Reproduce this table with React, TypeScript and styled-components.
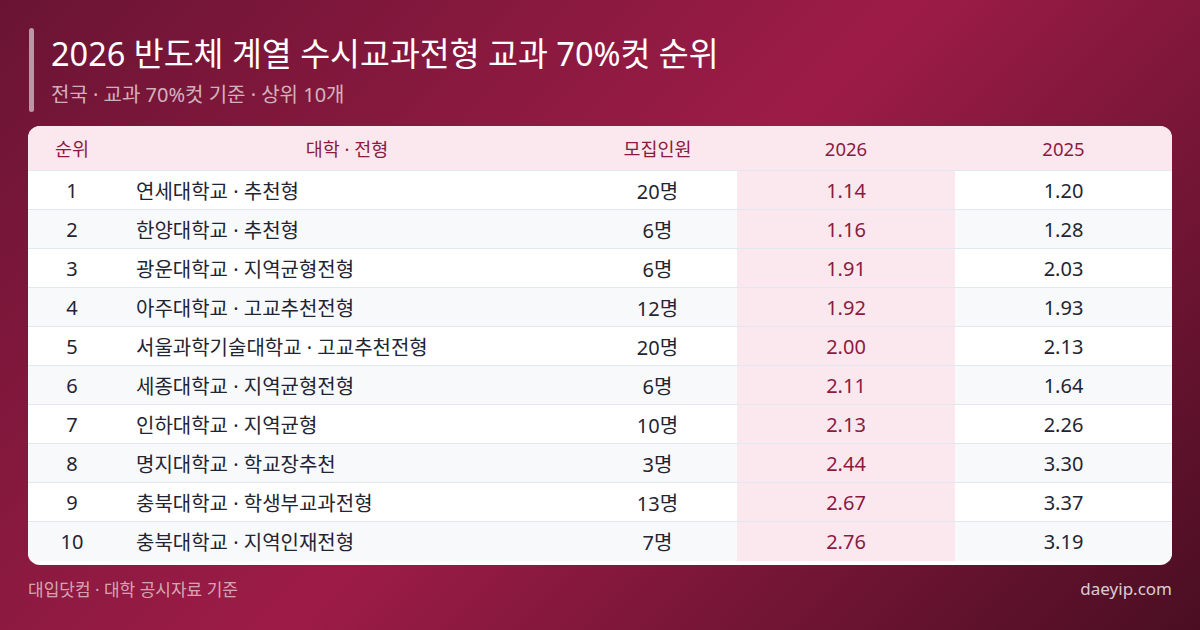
import React from "react";
import styled, { createGlobalStyle } from "styled-components";

const Global = createGlobalStyle`
  html, body { margin: 0; padding: 0; }
  body {
    width: 1200px;
    height: 630px;
    overflow: hidden;
    font-family: "Noto Sans", "Noto Sans CJK KR", sans-serif;
  }
`;

const Page = styled.div`
  box-sizing: border-box;
  width: 1200px;
  height: 630px;
  padding: 28px 28px 0 28px;
  background: linear-gradient(135deg, #6a1433 0%, #9d1c47 50%, #4a0e22 100%);
  display: flex;
  flex-direction: column;
`;

const Header = styled.div`
  display: flex;
  gap: 17px;
  height: 84px;
`;

const AccentBar = styled.div`
  width: 5px;
  margin-left: 1px;
  border-radius: 3px;
  background: rgba(255, 255, 255, 0.55);
`;

const TitleBlock = styled.div`
  display: flex;
  flex-direction: column;
`;

const Title = styled.h1`
  margin: 0;
  margin-top: 4px;
  font-size: 32.5px;
  font-weight: 400;
  line-height: 44px;
  color: #ffffff;
`;

const Subtitle = styled.div`
  margin-top: 6px;
  font-size: 20px;
  line-height: 26px;
  color: rgba(255, 255, 255, 0.68);
`;

const Card = styled.div`
  margin-top: 14px;
  background: #ffffff;
  border-radius: 12px;
  overflow: hidden;
  padding-bottom: 4px;
`;

const COLS = "88px 462px 159px 218px 1fr";

const HeadRow = styled.div`
  display: grid;
  grid-template-columns: ${COLS};
  height: 45px;
  background: #fbe8ef;
  border-bottom: 1px solid #e2e8f0;
  box-sizing: border-box;
`;

const HeadCell = styled.div`
  display: flex;
  align-items: center;
  justify-content: center;
  font-size: 18.5px;
  color: #8c1a40;
`;

const Row = styled.div<{ $alt: boolean; $last: boolean }>`
  display: grid;
  grid-template-columns: ${COLS};
  height: 39px;
  box-sizing: border-box;
  background: ${(p) => (p.$alt ? "#f8f9fb" : "#ffffff")};
  border-bottom: ${(p) => (p.$last ? "none" : "1px solid #e2e8f0")};
`;

const Cell = styled.div<{ $align?: "left" | "center"; $hl?: boolean }>`
  display: flex;
  align-items: center;
  justify-content: ${(p) => (p.$align === "left" ? "flex-start" : "center")};
  padding-left: ${(p) => (p.$align === "left" ? "20px" : "0")};
  font-size: 20px;
  color: ${(p) => (p.$hl ? "#8c1a40" : "#1f2533")};
  background: ${(p) => (p.$hl ? "#fbe8ef" : "transparent")};
`;

const Footer = styled.div`
  display: flex;
  justify-content: space-between;
  align-items: center;
  margin-top: 11px;
  font-size: 17px;
  color: rgba(255, 255, 255, 0.62);
`;

const FooterRight = styled.span`
  color: rgba(255, 255, 255, 0.8);
`;

const data: [string, string, string, string][] = [
  ["연세대학교 · 추천형", "20명", "1.14", "1.20"],
  ["한양대학교 · 추천형", "6명", "1.16", "1.28"],
  ["광운대학교 · 지역균형전형", "6명", "1.91", "2.03"],
  ["아주대학교 · 고교추천전형", "12명", "1.92", "1.93"],
  ["서울과학기술대학교 · 고교추천전형", "20명", "2.00", "2.13"],
  ["세종대학교 · 지역균형전형", "6명", "2.11", "1.64"],
  ["인하대학교 · 지역균형", "10명", "2.13", "2.26"],
  ["명지대학교 · 학교장추천", "3명", "2.44", "3.30"],
  ["충북대학교 · 학생부교과전형", "13명", "2.67", "3.37"],
  ["충북대학교 · 지역인재전형", "7명", "2.76", "3.19"],
];

export default function App() {
  return (
    <>
      <Global />
      <Page>
        <Header>
          <AccentBar />
          <TitleBlock>
            <Title>2026 반도체 계열 수시교과전형 교과 70%컷 순위</Title>
            <Subtitle>전국 · 교과 70%컷 기준 · 상위 10개</Subtitle>
          </TitleBlock>
        </Header>
        <Card>
          <HeadRow>
            <HeadCell>순위</HeadCell>
            <HeadCell>대학 · 전형</HeadCell>
            <HeadCell>모집인원</HeadCell>
            <HeadCell>2026</HeadCell>
            <HeadCell>2025</HeadCell>
          </HeadRow>
          {data.map((d, i) => (
            <Row key={i} $alt={i % 2 === 1} $last={i === data.length - 1}>
              <Cell>{i + 1}</Cell>
              <Cell $align="left">{d[0]}</Cell>
              <Cell>{d[1]}</Cell>
              <Cell $hl>{d[2]}</Cell>
              <Cell>{d[3]}</Cell>
            </Row>
          ))}
        </Card>
        <Footer>
          <span>대입닷컴 · 대학 공시자료 기준</span>
          <FooterRight>daeyip.com</FooterRight>
        </Footer>
      </Page>
    </>
  );
}
